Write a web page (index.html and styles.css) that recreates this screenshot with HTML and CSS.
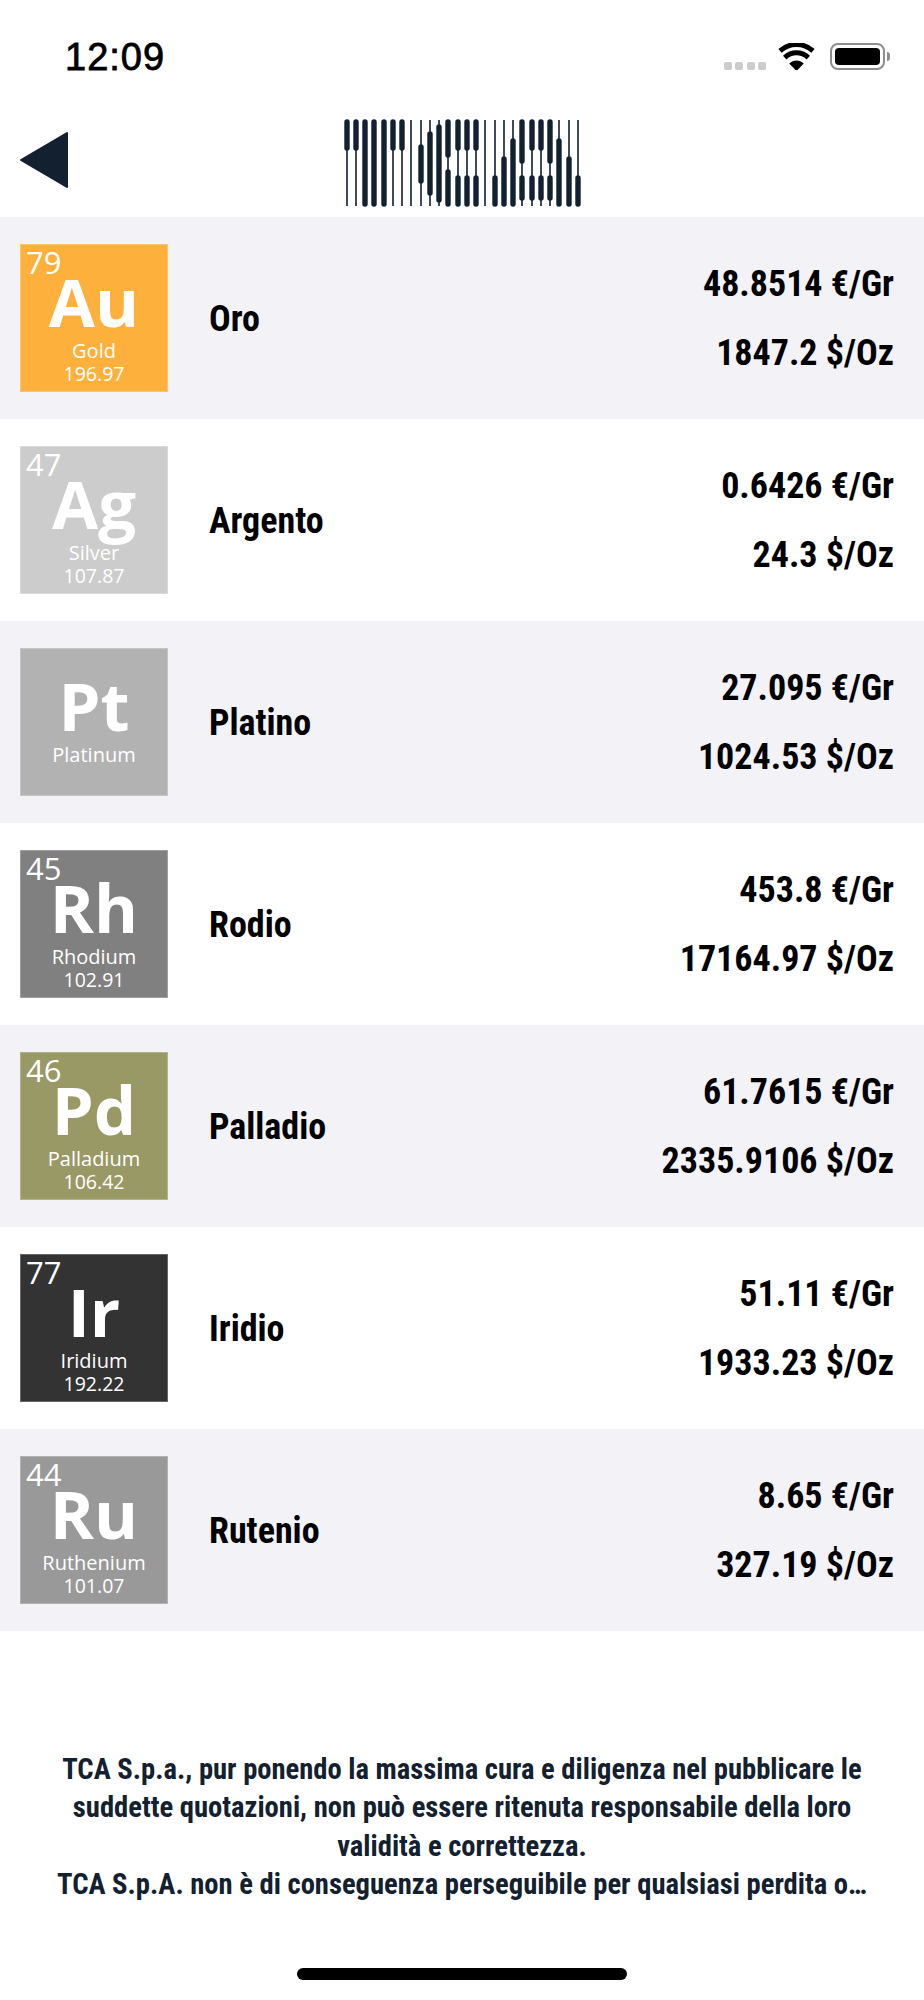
FILE: index.html
```html
<!DOCTYPE html>
<html lang="it">
<head>
  <meta charset="UTF-8">
  <meta name="viewport" content="width=device-width, initial-scale=1.0">
  <title>Quotazioni</title>
  <link rel="stylesheet" href="styles.css">
</head>
<body>
  <div class="statusbar">
    <span class="time">12:09</span>
    <div class="status-icons">
      <div class="signal"><i></i><i></i><i></i><i></i></div>
      <svg class="wifi" width="37" height="27" viewBox="0 0 37 27">
        <path d="M18.5 27L11.2 19.6C15.4 15.6 21.6 15.6 25.8 19.6Z" transform="translate(0 1)"/>
        <path class="wave" d="M6.7 14.6C13.6 8.2 23.4 8.2 30.3 14.6"/>
        <path class="wave" d="M2 7.8C11.6 -0.6 25.4 -0.6 35 7.8"/>
      </svg>
      <div class="battery"><div class="battery-fill"></div></div>
      <div class="battery-nub"></div>
    </div>
  </div>

  <header class="topbar">
    <svg class="back" width="50" height="58" viewBox="0 0 50 58">
      <path d="M48 2V56L2 29Z" fill="#12202f" stroke="#12202f" stroke-width="2" stroke-linejoin="round"/>
    </svg>
    <!-- logo: 26 barre, una linea sottile con i tratti spessi sopra -->
    <svg class="logo" width="240" height="88" viewBox="0 0 240 88">
      <path class="thin" d="M3 1V87M12 1V87M21 1V87M30 1V87M40 1V87M49 1V87M58 1V87M67 1V87M77 1V87M86 1V87M95 1V87M104 1V87M114 1V87M123 1V87M132 1V87M141 1V87M151 1V87M160 1V87M169 1V87M178 1V87M188 1V87M197 1V87M206 1V87M215 1V87M225 1V87M234 1V87"/>
      <path class="thick" d="M3 3V29M12 3V29M21 3V85M30 3V85M40 3V85M49 3V29M58 3V29M77 28V62M86 15V74M95 8V81M104 3V36M104 53V85M114 3V29M114 59V85M123 3V29M123 59V85M132 3V29M132 59V85M151 59V85M160 40V85M169 22V85M178 3V42M178 59V79M188 3V29M188 59V79M197 3V29M197 59V79M206 3V42M206 59V79M215 22V85M225 40V85M234 59V85"/>
    </svg>
  </header>

  <div class="list">
    <div class="row alt">
      <div class="tile gold"><span class="num">79</span><span class="sym">Au</span><span class="el">Gold</span><span class="mass">196.97</span></div>
      <div class="name">Oro</div>
      <div class="prices"><div>48.8514 €/Gr</div><div>1847.2 $/Oz</div></div>
    </div>
    <div class="row">
      <div class="tile silver"><span class="num">47</span><span class="sym">Ag</span><span class="el">Silver</span><span class="mass">107.87</span></div>
      <div class="name">Argento</div>
      <div class="prices"><div>0.6426 €/Gr</div><div>24.3 $/Oz</div></div>
    </div>
    <div class="row alt">
      <div class="tile platinum"><span class="sym">Pt</span><span class="el">Platinum</span></div>
      <div class="name">Platino</div>
      <div class="prices"><div>27.095 €/Gr</div><div>1024.53 $/Oz</div></div>
    </div>
    <div class="row">
      <div class="tile rhodium"><span class="num">45</span><span class="sym">Rh</span><span class="el">Rhodium</span><span class="mass">102.91</span></div>
      <div class="name">Rodio</div>
      <div class="prices"><div>453.8 €/Gr</div><div>17164.97 $/Oz</div></div>
    </div>
    <div class="row alt">
      <div class="tile palladium"><span class="num">46</span><span class="sym">Pd</span><span class="el">Palladium</span><span class="mass">106.42</span></div>
      <div class="name">Palladio</div>
      <div class="prices"><div>61.7615 €/Gr</div><div>2335.9106 $/Oz</div></div>
    </div>
    <div class="row">
      <div class="tile iridium"><span class="num">77</span><span class="sym">Ir</span><span class="el">Iridium</span><span class="mass">192.22</span></div>
      <div class="name">Iridio</div>
      <div class="prices"><div>51.11 €/Gr</div><div>1933.23 $/Oz</div></div>
    </div>
    <div class="row alt">
      <div class="tile ruthenium"><span class="num">44</span><span class="sym">Ru</span><span class="el">Ruthenium</span><span class="mass">101.07</span></div>
      <div class="name">Rutenio</div>
      <div class="prices"><div>8.65 €/Gr</div><div>327.19 $/Oz</div></div>
    </div>
  </div>

  <p class="disclaimer">TCA S.p.a., pur ponendo la massima cura e diligenza nel pubblicare le suddette quotazioni, non può essere ritenuta responsabile della loro validità e correttezza.<br>TCA S.p.A. non è di conseguenza perseguibile per qualsiasi perdita o…</p>

  <div class="homebar"></div>
</body>
</html>
```

FILE: styles.css
```css
body {
  margin: 0;
  width: 924px;
  height: 2000px;
  overflow: hidden;
  position: relative;
  background-color: #fff;
  font-family: "Roboto", sans-serif;
  font-stretch: 75%;
  color: #000;
}
.statusbar {
  height: 110px;
  display: flex;
  justify-content: space-between;
  align-items: flex-start;
  padding: 0 34px 0 65px;
}
.time {
  margin-top: 35px;
  font-family: "Liberation Sans", sans-serif;
  font-stretch: normal;
  font-size: 38px;
  line-height: 44px;
  letter-spacing: 1px;
  -webkit-text-stroke: 0.8px #000;
}
.status-icons {
  margin-top: 43px;
  display: flex;
  align-items: flex-start;
}
.signal {
  display: flex;
  gap: 3.4px;
  margin-top: 19px;
  margin-right: 12px;
}
.signal i {
  display: block;
  width: 8px;
  height: 8px;
  border-radius: 2px;
  background-color: #ccc;
}
.wave {
  fill: none;
  stroke: #000;
  stroke-width: 5;
}
.wifi {
  margin-right: 15px;
}
.battery {
  box-sizing: border-box;
  width: 55px;
  height: 27px;
  padding: 3px;
  border: 2px solid #8e8e8e;
  border-radius: 8px;
}
.battery-fill {
  height: 100%;
  border-radius: 4px;
  background-color: #000;
}
.battery-nub {
  width: 3px;
  height: 9px;
  margin: 9px 0 0 2px;
  border-radius: 0 3px 3px 0;
  background-color: #8e8e8e;
}
.topbar {
  height: 107px;
  display: flex;
  justify-content: center;
  position: relative;
}
.back {
  position: absolute;
  left: 19px;
  top: 21px;
}
.logo {
  margin-top: 9px;
  margin-left: 3px;
}
.thin {
  fill: none;
  stroke: #12202f;
  stroke-width: 1.6;
}
.thick {
  fill: none;
  stroke: #12202f;
  stroke-width: 5.4;
  stroke-linecap: round;
}
.row {
  box-sizing: border-box;
  height: 202px;
  display: flex;
  align-items: center;
  padding: 0 30px 0 20px;
}
.alt {
  background-color: #f2f2f7;
}
.tile {
  position: relative;
  box-sizing: border-box;
  flex: none;
  width: 148px;
  height: 148px;
  display: flex;
  flex-direction: column;
  align-items: center;
  padding-top: 23px;
  border: 1px solid rgba(255, 255, 255, 0.25);
  font-family: "Open Sans", sans-serif;
  font-stretch: normal;
  color: #fff;
}
.gold { background-color: #fdb03b; }
.silver { background-color: #ccc; }
.platinum { background-color: #b2b2b2; }
.rhodium { background-color: #808080; }
.palladium { background-color: #996; }
.iridium { background-color: #333; }
.ruthenium { background-color: #999; }
.num {
  position: absolute;
  left: 5px;
  top: 1px;
  font-size: 31px;
  line-height: 32px;
}
.sym {
  font-size: 67px;
  line-height: 67px;
  font-weight: 700;
}
.el {
  margin-top: 4px;
  font-size: 20px;
  line-height: 23px;
}
.mass {
  font-size: 19.5px;
  line-height: 23px;
}
.name {
  margin: 2px 0 0 41px;
  font-size: 36px;
  font-weight: 700;
}
.prices {
  margin: 2px 0 0 auto;
  text-align: right;
  font-size: 36px;
  line-height: 69px;
  font-weight: 700;
}
.disclaimer {
  margin: 119px 0 0;
  padding: 0 50px;
  text-align: center;
  color: #12202f;
  font-size: 28.6px;
  line-height: 38.3px;
  font-weight: 700;
}
.homebar {
  position: absolute;
  left: 297px;
  top: 1968px;
  width: 330px;
  height: 12px;
  border-radius: 6px;
  background-color: #000;
}
```
